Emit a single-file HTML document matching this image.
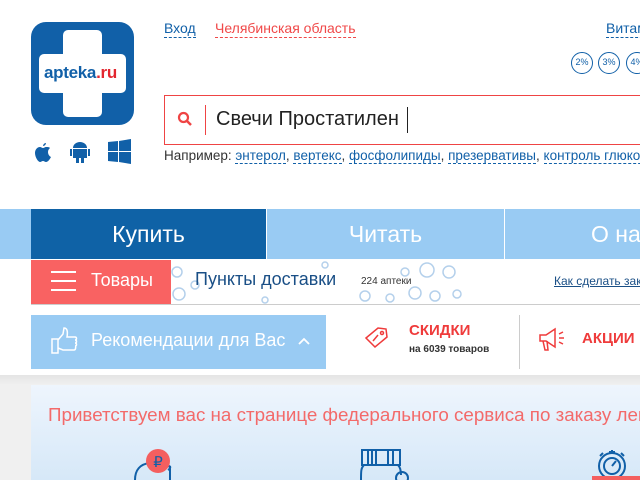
<!DOCTYPE html>
<html><head><meta charset="utf-8">
<style>
*{margin:0;padding:0;box-sizing:border-box}
html,body{width:640px;height:480px;overflow:hidden}
body{background:#fff;font-family:"Liberation Sans",sans-serif;position:relative}
#w{position:absolute;left:0;top:0;width:640px;height:480px;overflow:hidden}
.a{position:absolute;white-space:nowrap}
.dl{border-bottom:1px dashed}
</style></head><body><div id="w">
<!-- logo -->
<div class="a" style="left:31px;top:22px;width:103px;height:103px;background:#1160a8;border-radius:15px"></div>
<div class="a" style="left:63px;top:30px;width:39px;height:87px;background:#fff;border-radius:5px"></div>
<div class="a" style="left:39px;top:54px;width:87px;height:39px;background:#fff;border-radius:5px"></div>
<div class="a" style="left:44px;top:63px;font-size:17px;font-weight:bold;color:#1160a8;letter-spacing:-0.3px">apteka<span style="color:#e3262f">.ru</span></div>
<!-- os icons -->
<svg class="a" style="left:32px;top:139px" width="102" height="26" viewBox="0 0 102 26">
<path fill="#1160a8" d="M14 4c-2 0-3 2-3 3 2 0 3-2 3-3zM8 8c-3 0-5 3-5 6 0 4 3 9 5 9 1 0 2-1 3-1s2 1 3 1c2 0 4-3 5-5-2-1-3-3-3-5s1-3 2-4c-1-1-2-1-4-1-1 0-2 1-3 1s-2-1-3-1z"/>
<path fill="#1160a8" d="M41 9a7 6 0 0 1 14 0zM44 3l2 3M52 3l-2 3M41 10h14v9h-14zM38 10h2v7h-2zM56 10h2v7h-2zM44 19h3v5h-3zM49 19h3v5h-3z"/>
<path fill="#1160a8" d="M76 3l10-1v10h-10zM87 2l12-2v12h-12zM76 13h10v10l-10-1zM87 13h12v12l-12-2z"/>
</svg>
<!-- top links -->
<div class="a dl" style="left:164px;top:20px;font-size:14px;color:#1160a8;border-color:#1160a8;line-height:17px">Вход</div>
<div class="a dl" style="left:215px;top:20px;font-size:14px;color:#f04848;border-color:#f04848;line-height:17px">Челябинская область</div>
<div class="a dl" style="left:606px;top:20px;font-size:14px;color:#1160a8;border-color:#1160a8;line-height:17px">Витамины</div>
<div class="a" style="left:571px;top:52px;width:22px;height:22px;border:1.5px solid #1160a8;border-radius:50%;font-size:9px;color:#1160a8;text-align:center;line-height:19px">2%</div>
<div class="a" style="left:598px;top:52px;width:22px;height:22px;border:1.5px solid #1160a8;border-radius:50%;font-size:9px;color:#1160a8;text-align:center;line-height:19px">3%</div>
<div class="a" style="left:626px;top:52px;width:22px;height:22px;border:1.5px solid #1160a8;border-radius:50%;font-size:9px;color:#1160a8;text-align:center;line-height:19px">4%</div>
<!-- search -->
<div class="a" style="left:164px;top:95px;width:490px;height:50px;border:1px solid #ef4444"></div>
<svg class="a" style="left:177px;top:111px" width="16" height="16"><circle cx="6.5" cy="6.5" r="4.5" fill="none" stroke="#ef4444" stroke-width="2.2"/><path d="M10 10l4 4" stroke="#ef4444" stroke-width="2.5"/></svg>
<div class="a" style="left:205px;top:105px;width:1px;height:30px;background:#ef4444"></div>
<div class="a" style="left:216px;top:108px;font-size:20px;color:#222">Свечи Простатилен</div>
<div class="a" style="left:407px;top:107px;width:1px;height:26px;background:#222"></div>
<div class="a" style="left:164px;top:148px;font-size:13.5px;color:#333">Например: <span class="dl" style="color:#1160a8">энтерол</span>, <span class="dl" style="color:#1160a8">вертекс</span>, <span class="dl" style="color:#1160a8">фосфолипиды</span>, <span class="dl" style="color:#1160a8">презервативы</span>, <span class="dl" style="color:#1160a8">контроль глюкозы</span></div>
<!-- nav -->
<div class="a" style="left:0;top:209px;width:640px;height:50px;background:#99cbf3"></div>
<div class="a" style="left:31px;top:209px;width:235px;height:50px;background:#0f62a6;color:#fff;font-size:23px;text-align:center;line-height:50px">Купить</div>
<div class="a" style="left:266px;top:209px;width:1px;height:50px;background:#fff"></div>
<div class="a" style="left:267px;top:209px;width:237px;height:50px;color:#fff;font-size:23px;text-align:center;line-height:50px">Читать</div>
<div class="a" style="left:504px;top:209px;width:1px;height:50px;background:#fff"></div>
<div class="a" style="left:591px;top:209px;color:#fff;font-size:23px;line-height:50px">О нас</div>
<!-- row 2 -->
<svg class="a" style="left:165px;top:260px" width="300" height="44"><g fill="none" stroke="#a8c8e8" stroke-width="1.5" opacity=".85"><circle cx="12" cy="12" r="5"/><circle cx="14" cy="34" r="6"/><circle cx="30" cy="25" r="4"/><circle cx="262" cy="10" r="7"/><circle cx="284" cy="12" r="6"/><circle cx="250" cy="33" r="6"/><circle cx="270" cy="36" r="5"/><circle cx="292" cy="34" r="4"/><circle cx="200" cy="36" r="5"/><circle cx="225" cy="38" r="4"/><circle cx="240" cy="12" r="4"/><circle cx="100" cy="40" r="3"/><circle cx="160" cy="5" r="3"/></g></svg>
<div class="a" style="left:31px;top:260px;width:140px;height:44px;background:#f96262"></div>
<div class="a" style="left:51px;top:271px;width:25px;height:2px;background:#fff"></div>
<div class="a" style="left:51px;top:280px;width:25px;height:2px;background:#fff"></div>
<div class="a" style="left:51px;top:289px;width:25px;height:2px;background:#fff"></div>
<div class="a" style="left:91px;top:270px;font-size:18px;color:#fff">Товары</div>
<div class="a" style="left:195px;top:269px;font-size:18px;color:#1a4f86">Пункты доставки</div>
<div class="a" style="left:361px;top:276px;font-size:10px;color:#333">224 аптеки</div>
<div class="a" style="left:554px;top:274px;font-size:12px;color:#1a4f86;text-decoration:underline">Как сделать заказ</div>
<div class="a" style="left:31px;top:304px;width:609px;height:1px;background:#ccc"></div>
<!-- row 3 -->
<div class="a" style="left:31px;top:315px;width:295px;height:54px;background:#99cbf3"></div>
<svg class="a" style="left:50px;top:327px" width="28" height="28"><path d="M2 12h6v14h-6zM8 13l5-6 1-6c3 0 4 3 3 9h8c2 0 2 3 0 3 2 0 2 3 0 3 2 0 2 3 0 3 1 0 1 4-1 4h-11l-5-2" fill="none" stroke="#fff" stroke-width="1.5"/></svg>
<div class="a" style="left:91px;top:330px;font-size:18px;color:#fff">Рекомендации для Вас</div>
<svg class="a" style="left:297px;top:336px" width="14" height="10"><path d="M2 8l5-5 5 5" fill="none" stroke="#fff" stroke-width="1.8"/></svg>
<svg class="a" style="left:362px;top:324px" width="28" height="28"><g fill="none" stroke="#ef3b3b" stroke-width="1.5"><path d="M4 14l12-10 8 1 1 8-12 10z"/><circle cx="20" cy="9" r="1.5"/><path d="M11 17l5-6"/></g></svg>
<div class="a" style="left:409px;top:322px;font-size:15px;font-weight:bold;color:#ef3b3b">СКИДКИ</div>
<div class="a" style="left:409px;top:344px;font-size:10px;font-weight:bold;color:#333">на 6039 товаров</div>
<div class="a" style="left:519px;top:315px;width:1px;height:54px;background:#ccc"></div>
<svg class="a" style="left:538px;top:326px" width="30" height="28"><g fill="none" stroke="#ef3b3b" stroke-width="1.5"><path d="M2 9h6l9-6v18l-9-6h-6z"/><path d="M5 15l2 9h3l-1-9M21 8l4-2M21 12h5M21 16l4 2"/></g></svg>
<div class="a" style="left:582px;top:330px;font-size:15px;font-weight:bold;color:#ef3b3b">АКЦИИ</div>
<!-- bottom -->
<div class="a" style="left:0;top:375px;width:640px;height:105px;background:linear-gradient(#e4e4e4,#f0f0f0 10px,#f0f0f0)"></div>
<div class="a" style="left:31px;top:385px;width:609px;height:95px;background:linear-gradient(#eef5fd,#d6e8f8)"></div>
<div class="a" style="left:48px;top:404px;font-size:18.8px;color:#f36a6a">Приветствуем вас на странице федерального сервиса по заказу лекарств</div>
<svg class="a" style="left:130px;top:448px" width="60" height="32"><path d="M5 32c0-10 5-16 15-17M30 15c6 0 10 2 10 6v11M38 22c3-2 3-4 0-4" fill="none" stroke="#1160a8" stroke-width="2"/><circle cx="28" cy="13" r="12" fill="#f45f5f"/><text x="28" y="19" font-size="15" text-anchor="middle" fill="#1160a8" font-family="Liberation Sans">₽</text></svg>
<svg class="a" style="left:360px;top:448px" width="50" height="32"><g fill="none" stroke="#1160a8" stroke-width="2"><rect x="2" y="2" width="38" height="15"/><path d="M8 3v13M12 3v13M16 3v13M28 3v13M33 3v13M4 17c-3 3-3 6-3 15M38 17c2 2 3 5 3 10"/><circle cx="42" cy="30" r="6"/></g></svg>
<svg class="a" style="left:592px;top:448px" width="48" height="32"><g fill="none" stroke="#1160a8" stroke-width="2"><circle cx="20" cy="18" r="13"/><circle cx="20" cy="18" r="8"/><path d="M17 4h6M20 4v-2M20 18l4-5M8 8l3-3M32 8l-3-3"/></g><rect x="0" y="28" width="48" height="4" fill="#f45f5f"/></svg>
</div></body></html>
